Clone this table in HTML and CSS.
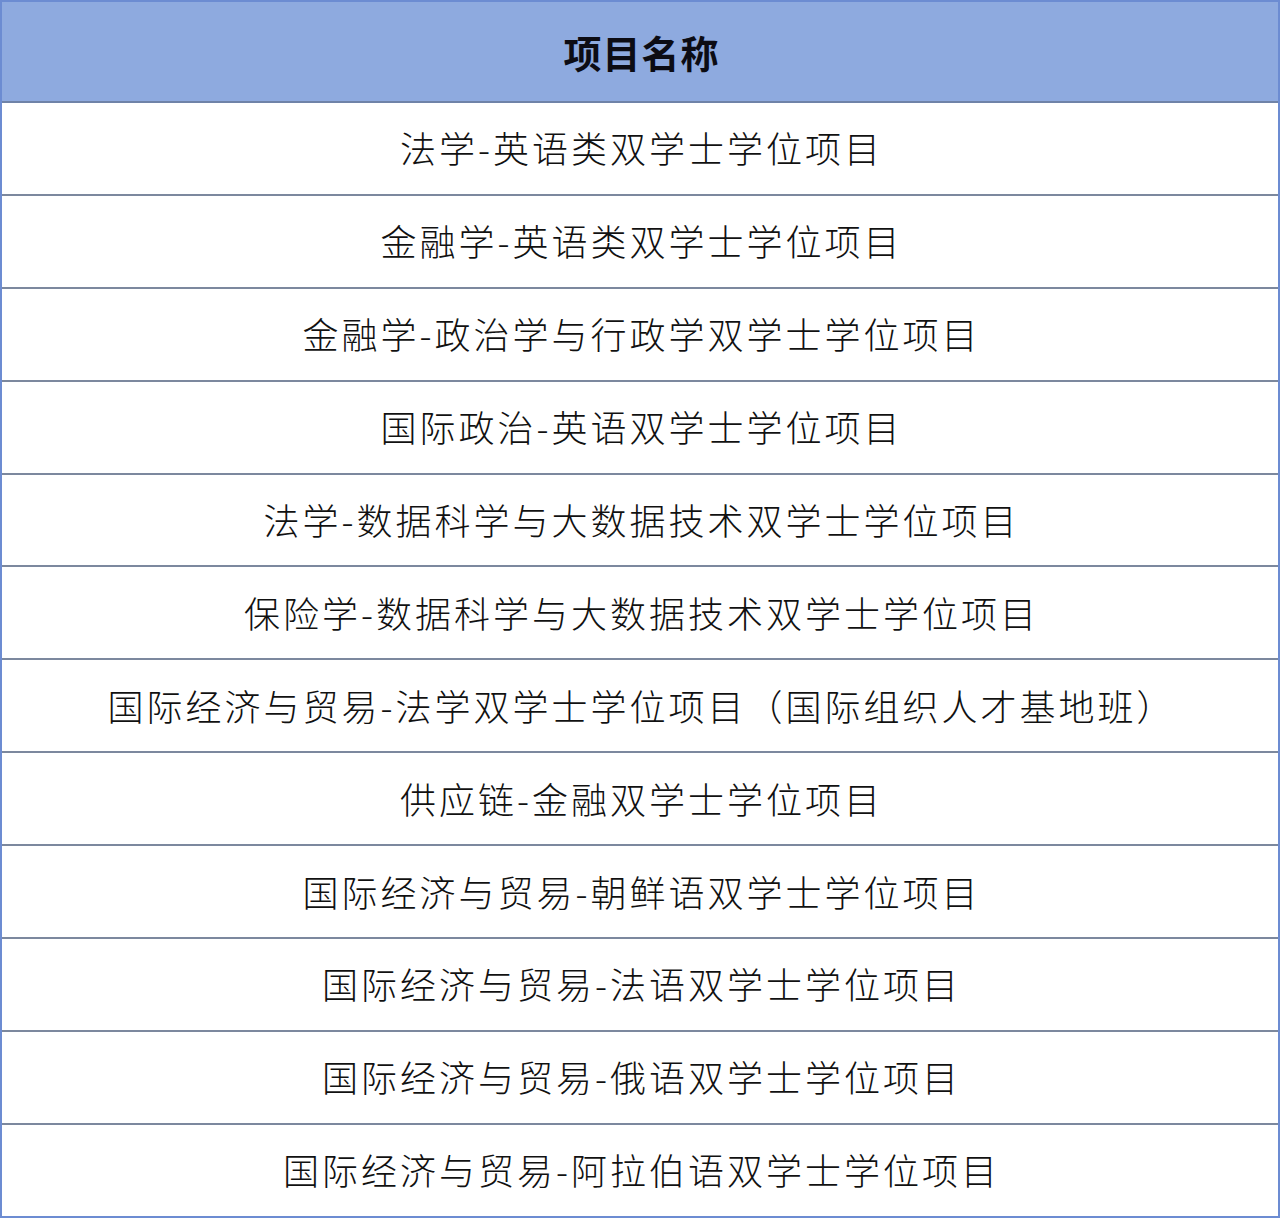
FILE: index.html
```html
<!DOCTYPE html>
<html lang="zh-CN">
<head>
<meta charset="utf-8">
<title>项目名称</title>
<link rel="stylesheet" href="styles.css">
</head>
<body>
<div class="table">
  <div class="row head">项目名称</div>
  <div class="row">法学-英语类双学士学位项目</div>
  <div class="row">金融学-英语类双学士学位项目</div>
  <div class="row">金融学-政治学与行政学双学士学位项目</div>
  <div class="row">国际政治-英语双学士学位项目</div>
  <div class="row">法学-数据科学与大数据技术双学士学位项目</div>
  <div class="row">保险学-数据科学与大数据技术双学士学位项目</div>
  <div class="row">国际经济与贸易-法学双学士学位项目（国际组织人才基地班）</div>
  <div class="row">供应链-金融双学士学位项目</div>
  <div class="row">国际经济与贸易-朝鲜语双学士学位项目</div>
  <div class="row">国际经济与贸易-法语双学士学位项目</div>
  <div class="row">国际经济与贸易-俄语双学士学位项目</div>
  <div class="row">国际经济与贸易-阿拉伯语双学士学位项目</div>
</div>
</body>
</html>
```
FILE: styles.css
```css
html, body {
  margin: 0;
  padding: 0;
  background: #ffffff;
}
.table {
  width: 1280px;
  height: 1218px;
  box-sizing: border-box;
  border: 2px solid #6c8cd2;
  display: flex;
  flex-direction: column;
  font-family: "Noto Sans CJK SC", "Noto Sans", sans-serif;
  color: #111111;
}
.row {
  height: 92.9px;
  box-sizing: border-box;
  border-bottom: 2px solid #7c889e;
  display: flex;
  align-items: center;
  justify-content: center;
  font-size: 36px;
  font-weight: 300;
  letter-spacing: 3px;
  padding-left: 3px;
  padding-bottom: 2px;
  white-space: nowrap;
}
.row:last-child {
  border-bottom: none;
  flex: 1;
}
.head {
  height: 101px;
  background: #8eaadf;
  font-weight: 700;
  font-size: 38px;
  letter-spacing: 1px;
  color: #0c0c14;
  border-bottom-color: #6f83a8;
  padding-bottom: 0;
}
```
